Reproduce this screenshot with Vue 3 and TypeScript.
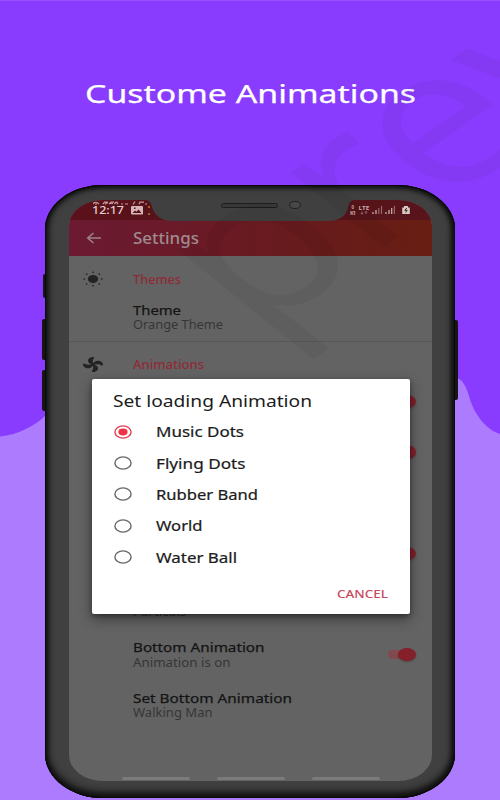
<script setup lang="ts">
import { h } from 'vue'

interface LineProps {
  s: string
  w: number
  size?: number
}

// One line of wide-set text: 14px tall box, baseline at 12px, stretched to w.
const Line = (props: LineProps) =>
  h('svg', { width: props.w, height: 14, style: { overflow: 'visible', display: 'block', flex: 'none' } }, [
    h(
      'text',
      { x: 0, y: 12, 'font-size': props.size ?? 13, textLength: props.w, lengthAdjust: 'spacingAndGlyphs', fill: 'currentColor' },
      props.s,
    ),
  ])
Line.props = ['s', 'w', 'size']

interface Pref {
  title?: string
  tw?: number
  sub?: string
  sw?: number
  on?: boolean
}

const prefs: Pref[] = [
  { on: true },
  { on: true },
  {},
  { on: true },
  { sub: 'Particals', sw: 53 },
  { title: 'Bottom Animation', tw: 131.5, sub: 'Animation is on', sw: 97.5, on: true },
  { title: 'Set Bottom Animation', tw: 159, sub: 'Walking Man', sw: 79.5 },
]

const options = [
  { label: 'Music Dots', w: 88 },
  { label: 'Flying Dots', w: 89.5 },
  { label: 'Rubber Band', w: 102 },
  { label: 'World', w: 46.5 },
  { label: 'Water Ball', w: 81 },
]
const chosen = 0
</script>

<template>
  <div class="stage">
    <svg class="backdrop" viewBox="0 0 500 800">
      <path d="M0 436.500C18 435 36 425 45 416L240 350L455 378C462 378 466 386 469 396C474 415 487 430 500 434V800H0Z" fill="#ad7bfe" />
      <path d="M0 .5H500" stroke="#9650ff" />
    </svg>

    <h1 class="heading"><Line s="Custome Animations" :w="331" :size="26" /></h1>

    <div class="phone">
      <i class="key k1" /><i class="key k2" /><i class="key k3" /><i class="key k4" />
      <div class="screen">
        <div class="status">
          <div class="clock">
            <Line s="12:17" :w="32" :size="11.5" />
            <svg width="12" height="9" viewBox="0 0 12 9"><path fill-rule="evenodd" fill="#d5b5b7" d="M1 0H11Q12 0 12 1V7.500Q12 8.500 11 8.500H1Q0 8.500 0 7.500V1Q0 0 1 0ZM1.500 7H10.500L7.500 3.500L5.500 5.800L4 4.600ZM3 1.500V3H4.500V1.500Z" /></svg>
            <svg width="2" height="9"><path d="M0 1H2M0 8H2" stroke="#b27b2c" stroke-width="1.500" /></svg>
          </div>
          <svg class="signals" width="64" height="14" viewBox="350 203 64 14">
            <g fill="#c8a9aa" font-size="5.500" font-weight="700">
              <text x="352.500" y="208.500" font-size="4.500" textLength="3.500">0</text>
              <text x="351" y="214.500" textLength="6">K1</text>
              <text x="359.500" y="210" textLength="11" lengthAdjust="spacingAndGlyphs">LTE</text>
            </g>
            <path d="M363 211.500V214M361.800 213L363 214.300L364.200 213M367 214V211.500M365.800 212.500L367 211.300L368.200 212.500" stroke="#a98082" fill="none" stroke-width=".8" />
            <path d="M374 212V214M377 210V214M387 212V214M390 210V214M392.700 208V214" stroke="#c8a9aa" stroke-width="1.300" />
            <path d="M379.800 208V214M382.500 206V214M395.400 206V214" stroke="#94676a" stroke-width="1.200" />
            <path d="M403.200 207.500H405V206H409V207.500H410.800V214H403.200Z" fill="#d8c8c4" />
            <path d="M407.800 208L405.800 210.300H408.200L406.600 212.500" stroke="#39251e" stroke-width="1" fill="none" />
          </svg>
        </div>
        <svg class="ghost" width="54" height="4" viewBox="0 0 54 4">
          <path d="M0 3Q2.500 -.5 6 3M2 3H4M10 3.200L11.500 1.200H14.500M12 3.200L15 1.200M16 3.200L18 1.200H21M17 2.500H20M21.500 3.200Q22 1 24.500 1.200M24 3.200L25 1.500M28 3H30M32 3H35M40 3.500L42 .5M46 3.200L47 1.200H51M52 3H54" stroke="#c39da0" fill="none" stroke-width="1.200" />
        </svg>
        <div class="appbar">
          <svg width="16" height="12" viewBox="0 0 16 12"><path d="M15 6H2M7.500 1L1.700 6L7.500 11" fill="none" stroke="#9a8288" stroke-width="1.600" /></svg>
          <Line s="Settings" :w="66" :size="15.5" />
        </div>

        <section class="group themes">
          <svg class="gicon" width="20" height="16" viewBox="0 0 20 16">
            <ellipse cx="10" cy="8" rx="5.200" ry="4" fill="#232323" />
            <g fill="#2b2b2b"><ellipse cx="1.200" cy="8" rx="1.200" ry=".8" /><ellipse cx="18.800" cy="8" rx="1.200" ry=".8" /><circle cx="10" cy="1.300" r=".9" /><circle cx="10" cy="14.700" r=".9" /><circle cx="3.700" cy="3.200" r=".9" /><circle cx="16.300" cy="3.200" r=".9" /><circle cx="3.700" cy="12.800" r=".9" /><circle cx="16.300" cy="12.800" r=".9" /></g>
          </svg>
          <div>
            <Line class="red" s="Themes" :w="48" :size="11.7" />
            <div class="theme">
              <Line class="name" s="Theme" :w="48" :size="13" />
              <Line class="sub" s="Orange Theme" :w="90" :size="11.7" />
            </div>
          </div>
        </section>
        <section class="group anim">
          <svg class="gicon" width="20" height="15" viewBox="1 1 22 22" preserveAspectRatio="none">
            <path fill="#232323" d="M12 11C13 8 15 6.500 17.500 6.500C20.500 6.500 23 9 23 12C23 14 21.500 13.500 20.500 12.600C18.500 11.300 16 12 13 12C16 13 17.500 15 17.500 17.500C17.500 20.500 15 23 12 23C10 23 10.500 21.500 11.400 20.500C12.700 18.500 12 16 12 13C11 16 9 17.500 6.500 17.500C3.500 17.500 1 15 1 12C1 10 2.500 10.500 3.500 11.400C5.500 12.700 8 12 11 12C8 11 6.500 9 6.500 6.500C6.500 3.500 9 1 12 1C14 1 13.500 2.500 12.600 3.500C11.300 5.500 12 8 12 11Z" />
            <circle cx="12" cy="12" r="2.200" fill="#232323" />
          </svg>
          <div><Line class="red" s="Animations" :w="71" :size="11.7" /></div>
        </section>
        <div class="prefs">
          <div v-for="(p, i) in prefs" :key="i" class="pref">
            <div class="words">
              <Line v-if="p.title" class="name" :s="p.title" :w="p.tw ?? 0" :size="13" />
              <div v-else class="blank" />
              <Line v-if="p.sub" class="sub" :s="p.sub" :w="p.sw ?? 0" :size="11.7" />
            </div>
            <div v-if="p.on" class="switch"><i /></div>
          </div>
        </div>
        <div class="nav"><i /><i /><i /></div>
        <svg class="notch" width="208" height="21" viewBox="0 0 208 21">
          <path d="M0 0H208Q203 1 202 7Q200 20.500 182 21H25Q10 20 6 7Q4 0 0 0Z" fill="#404040" />
        </svg>
      </div>
      <div class="speaker" />
      <div class="camera" />
    </div>

    <svg class="mark" viewBox="0 0 500 800">
      <text transform="translate(256 337) scale(1.33 1) rotate(-43)" font-size="192" textLength="392">prev</text>
    </svg>

    <div class="dialog">
      <Line class="dtitle" s="Set loading Animation" :w="199" :size="15.5" />
      <div class="options">
        <div v-for="(o, i) in options" :key="o.label" class="option">
          <svg width="18" height="14" viewBox="0 0 18 14">
            <ellipse cx="9" cy="7" rx="8.100" ry="6.100" fill="none" :stroke="i === chosen ? '#e23f52' : '#666'" stroke-width="1.400" />
            <ellipse v-if="i === chosen" cx="9" cy="7" rx="4.600" ry="3.400" fill="#ee3347" />
          </svg>
          <Line :s="o.label" :w="o.w" :size="13.5" />
        </div>
      </div>
      <div class="actions"><Line s="CANCEL" :w="51" :size="11" /></div>
    </div>
  </div>
</template>

<style>
body { margin: 0; overflow: hidden; }
</style>

<style scoped>
.stage { position: relative; width: 500px; height: 800px; overflow: hidden; background: #8a3cfe; font-family: "Noto Sans", sans-serif; }
.backdrop, .mark { position: absolute; inset: 0; width: 500px; height: 800px; }
.mark { font-family: "Open Sans", sans-serif; font-weight: 400; fill: #000; opacity: .04; }
.heading { position: relative; margin: 0; height: 184.500px; padding: 91px 0 0 84.500px; box-sizing: border-box; color: #fff; font-weight: 400; stroke: #fff; stroke-width: .25px; }
.phone {
  position: relative; box-sizing: border-box; width: 410px; height: 613.500px; margin-left: 45px; padding: 15.500px 23.500px 17px 24px;
  border-radius: 58px / 44px; background: #404040;
  box-shadow: inset 0 0 0 1px #090909, inset 0 0 4px 2px #111, inset 0 0 7px 2px #1b1b1b, inset -2px 0 5px #0c0c0c, inset 0 -5px 8px #111;
}
.key { position: absolute; background: #161616; border-radius: 2px 0 0 2px; width: 3px; left: -3px; }
.k1 { top: 89.500px; height: 24px; width: 2px; left: -2px; }
.k2 { top: 134.500px; height: 41px; }
.k3 { top: 185.500px; height: 41px; }
.k4 { top: 135.500px; height: 80px; left: auto; right: -3px; border-radius: 0 2px 2px 0; }
.screen { position: relative; height: 581px; background: #636363; border-radius: 34px / 26px; overflow: hidden; }
.status { height: 20px; box-sizing: border-box; padding: 1.500px 20px 0 23px; display: flex; justify-content: space-between; background: linear-gradient(90deg, #5b111b, #531318 50%, #58141a); }
.clock { display: flex; gap: 7px; color: #e3cfd1; font-weight: 500; }
.clock > svg + svg { margin-top: 4px; }
.clock > svg + svg + svg { margin-left: -2px; }
.signals { margin-top: 1.500px; flex: none; position: relative; left: 1px; }
.ghost { position: absolute; left: 24px; top: .5px; }
.appbar { height: 36px; box-sizing: border-box; padding: 11.500px 0 0 17px; display: flex; gap: 30.500px; color: #a08b90; font-weight: 500; background: linear-gradient(90deg, #6b1a32, #691a23 45%, #671c1b 70%, #681e12); }
.appbar > svg:first-child { margin-top: .5px; flex: none; }
.group { display: grid; grid-template-columns: 63.500px 1fr; box-sizing: border-box; }
.gicon { margin-left: 14px; }
.themes { height: 86px; padding-top: 15.500px; border-bottom: 1px solid #575757; }
.themes .gicon { margin-top: -.5px; }
.anim { height: 45.500px; padding-top: 14.500px; }
.red { color: #8f2b38; font-weight: 500; }
.theme { padding-top: 17px; }
.name { color: #141414; font-weight: 400; stroke: #141414; stroke-width: .25px; }
.sub { color: #363636; margin-top: .4px; }
.blank { height: 14px; }
.pref { height: 50.600px; display: flex; justify-content: space-between; padding: 0 15.500px 0 63.500px; }
.switch { width: 28px; height: 14px; margin-top: 7px; display: flex; justify-content: flex-end; align-items: center; background: linear-gradient(#814a50, #814a50) 0 50% / 22px 9px no-repeat; border-radius: 7px; }
.switch i { width: 18px; height: 13.500px; border-radius: 50%; background: #85202a; box-shadow: 0 1px 2px #0004; }
.nav { position: absolute; left: 53px; bottom: 1px; display: flex; gap: 27px; }
.nav i { width: 68px; height: 3px; border-radius: 2px; background: #7b7b7b; }
.notch { position: absolute; left: 77px; top: 0; }
.speaker { position: absolute; left: 176px; top: 18px; width: 57px; height: 5.500px; box-sizing: border-box; border: 1.500px solid #1d1d1d; border-radius: 4px; background: #383838; }
.camera { position: absolute; left: 244px; top: 16.500px; width: 11.500px; height: 8px; box-sizing: border-box; border: 1.800px solid #222; border-radius: 50%; background: #484848; }
.dialog { position: absolute; left: 92px; top: 379px; width: 318px; height: 235px; box-sizing: border-box; padding: 16px 21px 0; background: #fff; border-radius: 2px; box-shadow: 0 5px 14px #0006, 0 2px 5px #0005; color: #1c1c1c; }
.options { padding-top: 7px; }
.option { height: 31.400px; display: flex; align-items: center; gap: 24px; padding-left: 1px; font-weight: 400; }
.option > svg:first-child { flex: none; }
.option > svg + svg { position: relative; top: .6px; stroke: #1c1c1c; stroke-width: .2px; }
.actions { display: flex; justify-content: flex-end; padding: 13.500px 1.500px 0 0; color: #c84a5d; font-weight: 500; }
</style>
